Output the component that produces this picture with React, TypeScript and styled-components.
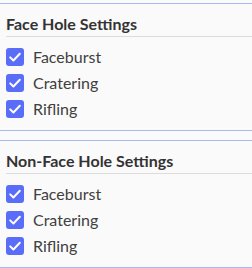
import React from 'react'
import styled, { createGlobalStyle } from 'styled-components'

const GlobalStyle = createGlobalStyle`
    body {
        margin: 0;
        background: #fafafa;
        font-family: Lato, 'Noto Sans', sans-serif;
    }
`

interface SectionModel {
    title: string
    options: string[]
}

const sections: SectionModel[] = [
    { title: 'Face Hole Settings', options: ['Faceburst', 'Cratering', 'Rifling'] },
    { title: 'Non-Face Hole Settings', options: ['Faceburst', 'Cratering', 'Rifling'] },
]

const CheckIcon = () => (
    <svg width="18" height="18" viewBox="0 0 18 18" fill="none">
        <path d="M4.2 9.4 L7.4 12.5 L13.8 5.8" stroke="#fff" strokeWidth="2" strokeLinecap="round" strokeLinejoin="round" />
    </svg>
)

const App: React.FC = () => {
    return (
        <Page>
            <GlobalStyle />
            {sections.map((section) => (
                <Panel key={section.title}>
                    <Header>{section.title}</Header>
                    <OptionList>
                        {section.options.map((option) => (
                            <Option key={option}>
                                <Box>
                                    <CheckIcon />
                                </Box>
                                <Label>{option}</Label>
                            </Option>
                        ))}
                    </OptionList>
                </Panel>
            ))}
        </Page>
    )
}

const Page = styled.div`
    display: flex;
    flex-direction: column;
    gap: 9px;
    padding-top: 3px;
    width: 252px;
`
const Panel = styled.section`
    border-top: 1px solid #a9b9f4;
    border-bottom: 1px solid #a9b9f4;
    background: #fafafa;
    padding-bottom: 12px;
`
const Header = styled.h3`
    margin: 0 0 0 6px;
    padding: 10px 0 2px;
    font-size: 16px;
    line-height: 20px;
    font-weight: 700;
    color: #333;
    border-bottom: 1px solid #dcdcdc;
`
const OptionList = styled.div`
    display: flex;
    flex-direction: column;
    gap: 8px;
    padding: 11px 0 0 6px;
`
const Option = styled.label`
    display: flex;
    align-items: center;
    gap: 9px;
    height: 18px;
    cursor: pointer;
`
const Box = styled.span`
    display: flex;
    width: 18px;
    height: 18px;
    border-radius: 3px;
    background: #5a6df8;
`
const Label = styled.span`
    font-size: 16px;
    line-height: 18px;
    color: #404040;
`

export default App
